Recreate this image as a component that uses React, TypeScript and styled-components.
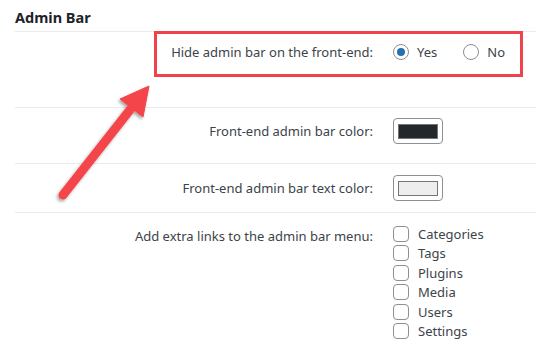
import styled, { createGlobalStyle } from "styled-components";

const GlobalStyle = createGlobalStyle`
  html, body {
    margin: 0;
    padding: 0;
    background: #ffffff;
  }
  body {
    font-family: "Noto Sans", "Open Sans", sans-serif;
    color: #3c434a;
  }
`;

const Page = styled.div`
  position: relative;
  width: 536px;
  height: 356px;
  overflow: hidden;
  padding-left: 15px;
  box-sizing: border-box;
`;

const Title = styled.h2`
  margin: 0;
  padding-top: 8px;
  height: 23px;
  font-size: 14.5px;
  line-height: 18px;
  font-weight: 700;
  color: #1d2327;
`;

const Row = styled.div<{ $pt?: number; $pb?: number; $h: number; $align?: string }>`
  display: grid;
  grid-template-columns: 378px 1fr;
  align-items: ${({ $align }) => $align || "start"};
  border-top: 1px solid #ebebec;
  height: ${({ $h }) => $h}px;
  padding-top: ${({ $pt }) => $pt || 0}px;
  padding-bottom: ${({ $pb }) => $pb || 0}px;
  box-sizing: border-box;
`;

const Label = styled.div<{ $offset?: number }>`
  text-align: right;
  padding-right: 20px;
  font-size: 13px;
  line-height: 16px;
  margin-top: ${({ $offset }) => $offset || 0}px;
  white-space: nowrap;
`;

const RadioGroup = styled.div`
  display: flex;
  align-items: center;
  gap: 26px;
`;

const Choice = styled.label`
  display: flex;
  align-items: center;
  gap: 8px;
  font-size: 13px;
  line-height: 16px;
`;

const RadioDot = styled.span<{ $checked?: boolean }>`
  width: 16px;
  height: 16px;
  border-radius: 50%;
  border: 1px solid #8c8f94;
  box-sizing: border-box;
  display: flex;
  align-items: center;
  justify-content: center;

  &::after {
    content: "";
    width: 8px;
    height: 8px;
    border-radius: 50%;
    background: ${({ $checked }) => ($checked ? "#2271b1" : "transparent")};
  }
`;

const SwatchButton = styled.div`
  width: 50px;
  height: 26px;
  border: 1px solid #8c8f94;
  border-radius: 4px;
  box-sizing: border-box;
  display: flex;
  align-items: center;
  justify-content: center;
  background: #fff;
`;

const Swatch = styled.span<{ $color: string }>`
  width: 40px;
  height: 15px;
  border: 1px solid #757575;
  box-sizing: border-box;
  background: ${({ $color }) => $color};
`;

const CheckList = styled.div`
  display: flex;
  flex-direction: column;
`;

const CheckItem = styled.label`
  display: flex;
  align-items: center;
  gap: 9px;
  height: 19.5px;
  font-size: 13px;
`;

const CheckBox = styled.span`
  width: 16px;
  height: 16px;
  border: 1px solid #8c8f94;
  border-radius: 4px;
  box-sizing: border-box;
  background: #fff;
`;

const Highlight = styled.div`
  position: absolute;
  left: 154px;
  top: 31px;
  width: 369px;
  height: 46px;
  border: 3px solid #f1414a;
  box-sizing: border-box;
  pointer-events: none;
`;

const ArrowLayer = styled.svg`
  position: absolute;
  left: 0;
  top: 0;
  pointer-events: none;
`;

const links = ["Categories", "Tags", "Plugins", "Media", "Users", "Settings"];

const App = () => (
  <Page>
    <GlobalStyle />
    <Title>Admin Bar</Title>

    <Row $pt={12} $h={76}>
      <Label>Hide admin bar on the front-end:</Label>
      <RadioGroup>
        <Choice>
          <RadioDot $checked />
          Yes
        </Choice>
        <Choice>
          <RadioDot />
          No
        </Choice>
      </RadioGroup>
    </Row>

    <Row $pb={9} $h={56} $align="center">
      <Label>Front-end admin bar color:</Label>
      <SwatchButton>
        <Swatch $color="#23282d" />
      </SwatchButton>
    </Row>

    <Row $h={49} $align="center">
      <Label>Front-end admin bar text color:</Label>
      <SwatchButton>
        <Swatch $color="#eeeeee" />
      </SwatchButton>
    </Row>

    <Row $pt={11} $h={144}>
      <Label $offset={4}>Add extra links to the admin bar menu:</Label>
      <CheckList>
        {links.map((l) => (
          <CheckItem key={l}>
            <CheckBox />
            {l}
          </CheckItem>
        ))}
      </CheckList>
    </Row>

    <Highlight />

    {/* callout arrow pointing at the highlighted option */}
    <ArrowLayer width="536" height="356" viewBox="0 0 536 356">
      <defs>
        <filter id="shadow" x="-30%" y="-30%" width="160%" height="160%">
          <feDropShadow dx="-1.5" dy="2" stdDeviation="1.5" floodColor="#000" floodOpacity="0.35" />
        </filter>
      </defs>
      <g filter="url(#shadow)" fill="#f4444b" stroke="#f4444b">
        <line x1="63" y1="195" x2="133" y2="106" strokeWidth="9" strokeLinecap="round" />
        <polygon points="149,86 143,117 120,99" strokeWidth="1" strokeLinejoin="round" />
      </g>
    </ArrowLayer>
  </Page>
);

export default App;
